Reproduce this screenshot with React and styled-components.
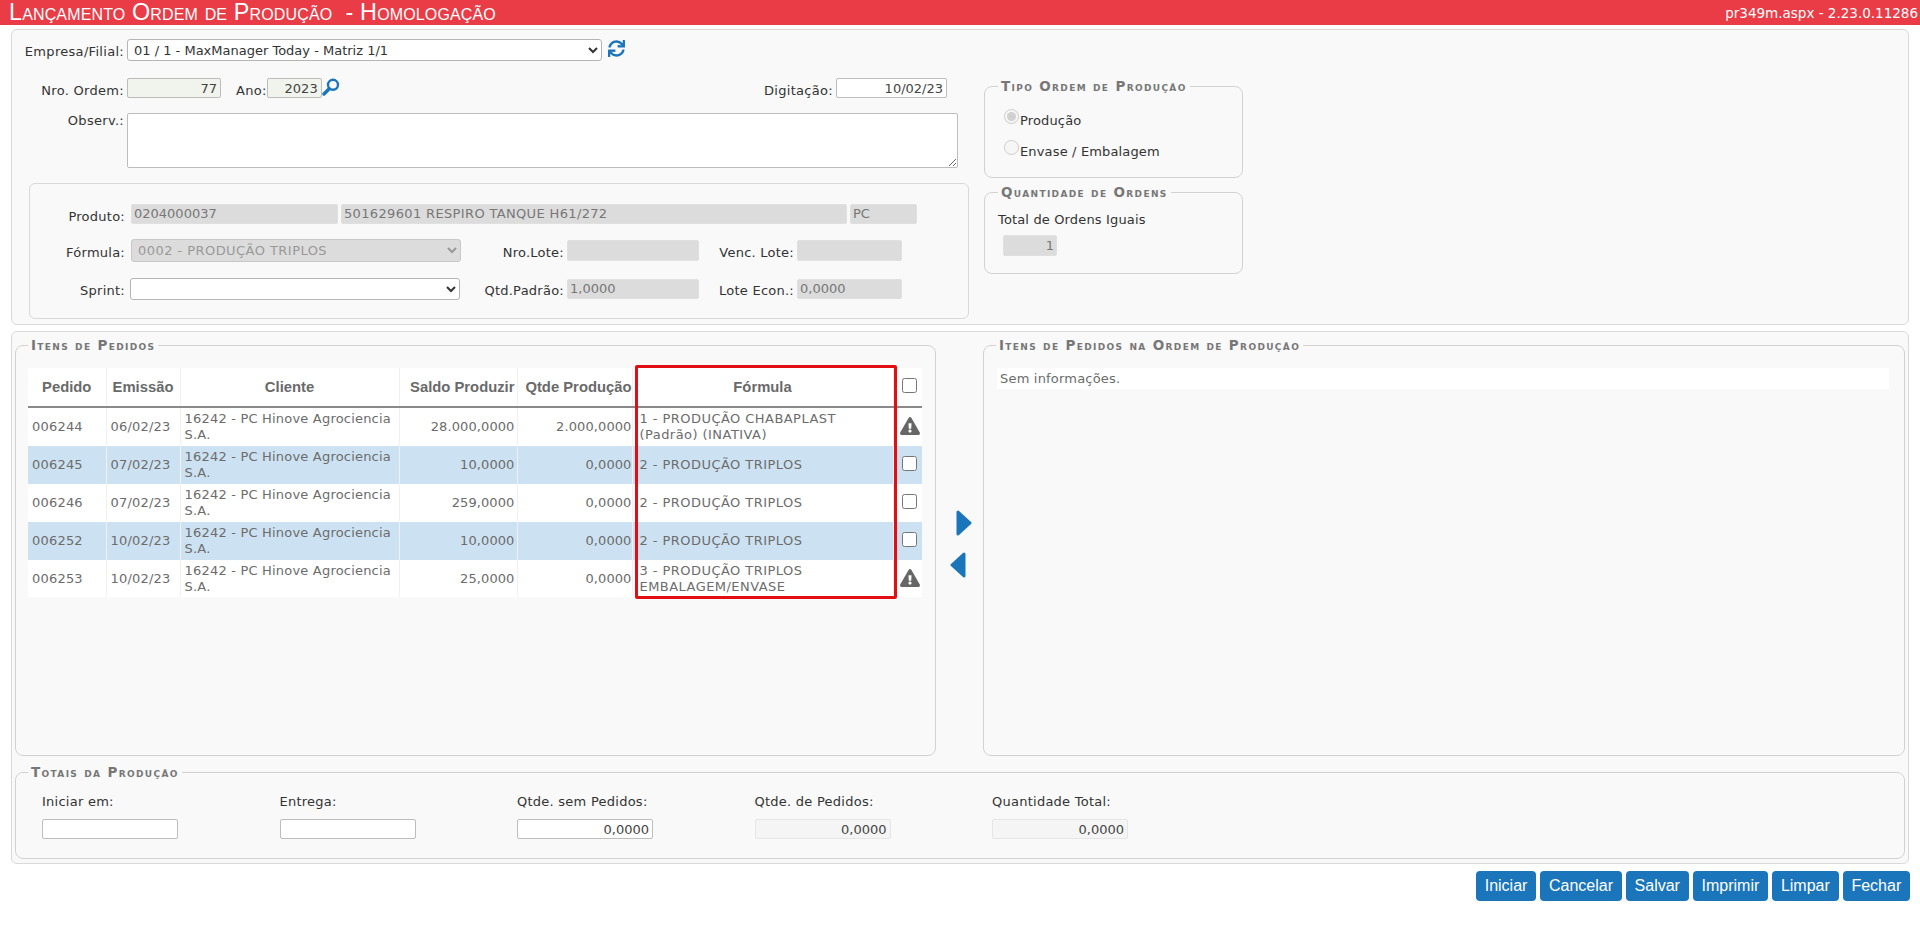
import React from "react";
import styled, { createGlobalStyle } from "styled-components";
import { FaSync, FaExclamationTriangle } from "react-icons/fa";

const GlobalStyle = createGlobalStyle`
  html, body { margin: 0; padding: 0; background: #fff; }
  body { font-family: "DejaVu Sans", Verdana, sans-serif; font-size: 13px; color: #333; }
  * { box-sizing: border-box; }
`;

const blue = "#1b75bb";

const TitleBar = styled.header`
  height: 25px; background: #e93c46; color: #fff; display: flex; align-items: center;
  justify-content: space-between; padding: 0 2px 0 9px;
`;
const Title = styled.h1`
  margin: 0; font: 400 23.4px/23px "Liberation Sans", Arial, sans-serif; font-variant: small-caps; white-space: pre; letter-spacing: .14px;
`;
const Version = styled.span` font-size: 13.5px; `;

const Panel = styled.section`
  margin: ${p => p.$top}px 11px 0; width: 1898px; background: #f9f9f9;
  border: 1px solid #d9d9d9; border-radius: 6px;
`;
const TopPanel = styled(Panel)` display: flex; gap: 15px; height: 296px; `;
const LeftCol = styled.div` width: 957px; padding-top: 9px; display: flex; flex-direction: column; `;
const RightCol = styled.div` width: 259px; padding-top: 49px; display: flex; flex-direction: column; gap: 7px; `;

const Row = styled.div`
  display: flex; align-items: ${p => p.$align || "center"}; height: ${p => p.$h}px; margin-top: ${p => p.$mt || 0}px;
`;
const Label = styled.label`
  flex: none; width: ${p => (p.$w ? p.$w + "px" : "auto")}; text-align: right; margin-left: ${p => p.$ml || 0}px;
  margin-right: ${p => p.$mr ?? 3}px; padding-top: ${p => p.$pt ?? 3}px; color: #333; white-space: nowrap; letter-spacing: .3px;
`;

const Field = styled.input`
  flex: none; display: block; width: ${p => p.$w}px; height: ${p => p.$h || 20}px; margin: 0; padding: 0 ${p => p.$kind === "gray" ? 2 : 3}px;
  font: 13px "DejaVu Sans", Verdana, sans-serif; text-align: ${p => p.$right ? "right" : "left"};
  color: ${p => p.$kind === "gray" ? "#777" : "#444"}; border-radius: 2px; outline: none;
  background: ${p => p.$kind === "gray" ? "#dcdcdc" : p.$kind === "key" ? "#f0f4ec" : p.$kind === "soft" ? "#f5f5f5" : "#fff"};
  border: 1px solid ${p => p.$kind === "gray" ? "#e0e0e0" : p.$kind === "soft" ? "#e6e6e6" : "#bdbdbd"};
`;
const ProductField = styled(Field)` padding-bottom: 2px; letter-spacing: ${p => p.$ls || 0}px; `;
const Select = styled.select`
  flex: none; display: block; width: ${p => p.$w}px; height: ${p => p.$h}px; margin: 0 0 0 ${p => p.$ml || 0}px; padding: 0 2px;
  font: 13px "DejaVu Sans", Verdana, sans-serif; letter-spacing: ${p => p.$ls || 0}px; color: #333; background: #fff; border: 1px solid #b5b5b5; border-radius: 3px;
  &:disabled { background: #dcdcdc; color: #999; border-color: #c8c8c8; opacity: 1; }
`;
const Area = styled.textarea`
  display: block; width: 831px; height: 55px; margin: 0; background: #fff; border: 1px solid #bdbdbd; border-radius: 2px;
`;
const IconBtn = styled.span`
  flex: none; display: inline-flex; color: ${blue}; margin-left: ${p => p.$ml || 0}px; align-self: flex-start; margin-top: ${p => p.$mt || 0}px;
`;
const PushRight = styled.div` margin-left: auto; display: flex; align-items: center; margin-right: 22px; `;

const ProductBox = styled.div`
  margin: 15px 0 0 17px; width: 940px; height: 136px; padding: 20px 0 0 0; border: 1px solid #d9d9d9; border-radius: 6px;
`;
const ProductRow = styled.div` display: flex; align-items: center; gap: 3px; height: 20px; `;
const ProductLabel = styled.label` flex: none; width: 98px; padding: 5px 3px 0 0; text-align: right; letter-spacing: .25px; white-space: nowrap; `;
const ProductGrid = styled.div`
  display: grid; grid-template-columns: 101px 330px 106px 132px 98px 105px; row-gap: 15px; grid-auto-rows: 23px;
  align-items: center; margin-top: 15px;
`;
const GridLabel = styled.label` text-align: right; padding-right: ${p => p.$pr ?? 6}px; padding-top: 3px; white-space: nowrap; letter-spacing: .25px; `;

const Fieldset = styled.fieldset`
  margin: 0; min-width: 0; width: ${p => p.$w ? p.$w + "px" : "auto"}; height: ${p => p.$h}px; padding: ${p => p.$pad || "0"};
  border: 1px solid #d2d2d2; border-radius: 8px;
`;
const Legend = styled.legend`
  margin-left: ${p => p.$ml || 0}px; padding: 0 3px; font: bold 13.5px/14px "DejaVu Sans", Verdana, sans-serif;
  font-variant: small-caps; letter-spacing: 1.35px; color: #777; white-space: nowrap;
`;
const RadioRow = styled.label` display: flex; align-items: flex-start; height: 31px; color: #333; `;
const Radio = styled.input` width: 15px; height: 15px; margin: 0 1px 0 0; flex: none; `;
const RadioText = styled.span` padding-top: 4px; letter-spacing: .15px; `;
const Caption = styled.div` line-height: 16px; letter-spacing: .15px; `;
const Ones = styled(Field)` margin: 7px 0 0 5px; `;

const ColumnsRow = styled.div`
  display: flex; padding: ${p => p.$pad || "6px 3px 0"};
`;
const ArrowCol = styled.div`
  width: 47px; flex: none; display: flex; flex-direction: column; justify-content: center; gap: 16px; padding-bottom: 6px;
`;
const ArrowSvg = styled.svg` display: block; width: 16px; height: 26px; margin-left: ${p => p.$ml}px; `;

const TableWrap = styled.div` position: relative; width: 894px; `;
const Table = styled.table`
  border-collapse: collapse; table-layout: fixed; width: 894px; background: #fff; color: #6c6c6c; font-size: 13px;
`;
const Col = styled.col` width: ${p => p.$w}px; `;
const Th = styled.th`
  height: 39px; padding: 0 ${p => p.$pr || 0}px 0 0; border-right: 1px solid #f1f1f1; border-bottom: 2px solid #8a8a8a;
  text-align: ${p => p.$pr !== undefined ? "right" : "center"}; white-space: nowrap;
  font: bold 14.8px "Liberation Sans", Arial, sans-serif; color: #6a6a6a;
  &:last-child { border-right: 0; }
`;
const Tr = styled.tr` background: ${p => p.$alt ? "#cce2f2" : "#fff"}; height: ${p => p.$h}px; `;
const Td = styled.td`
  padding: 0 ${p => p.$pr ?? 3}px 0 ${p => p.$pl ?? 4}px; line-height: 16px; border-right: 1px solid #f1f1f1; letter-spacing: ${p => p.$ls ?? 0.2}px;
  text-align: ${p => p.$right ? "right" : "left"};
  &:last-child { border-right: 0; text-align: center; padding: 0; }
`;
const Check = styled.input` display: block; width: 15px; height: 15px; margin: -3px auto 0 8px; `;
const Warn = styled(FaExclamationTriangle)` display: block; margin: -2px 0 0 6px; color: #666; width: 20px; height: 18px; `;
const RedBox = styled.div`
  position: absolute; left: 607px; top: -3px; width: 262px; height: 234px; border: 3px solid #e30d14; border-radius: 2px; pointer-events: none;
`;
const EmptyRow = styled.div`
  background: #fff; height: 21px; width: 892px; margin-left: 13px; padding-left: 3px; line-height: 21px; color: #6c6c6c; letter-spacing: .2px;
`;

const TotalsGrid = styled.div`
  display: grid; grid-template-columns: repeat(5, 237.5px); row-gap: 9px; padding-left: 26px;
`;
const TotalLabel = styled.div` line-height: 16px; letter-spacing: .25px; `;

const Actions = styled.div` display: flex; justify-content: flex-end; gap: 4px; margin: 7px 10px 0 0; `;
const Button = styled.button`
  height: 30px; padding: 0 8.8px; background: ${blue}; color: #fff; border: 0; border-radius: 4px;
  font: 16px "Liberation Sans", Arial, sans-serif;
`;

const Lens = () => (
  <svg width="18" height="18" viewBox="0 0 18 18" fill="none" stroke={blue}>
    <circle cx="11" cy="6.8" r="5" strokeWidth="2.4" />
    <path d="M7.2 10.8 2 16" strokeWidth="3.4" strokeLinecap="round" />
  </svg>
);
const Arrow = ({ left, ml }) => (
  <ArrowSvg $ml={ml} viewBox="0 0 16 26">
    <path d={left ? "M14 2 L2 13 L14 24 Z" : "M2 2 L14 13 L2 24 Z"} fill={blue} stroke={blue} strokeWidth="3" strokeLinejoin="round" />
  </ArrowSvg>
);

const rows = [
  ["006244", "06/02/23", "28.000,0000", "2.000,0000", <>1 - PRODUÇÃO CHABAPLAST<br />(Padrão) (INATIVA)</>, false, 39],
  ["006245", "07/02/23", "10,0000", "0,0000", "2 - PRODUÇÃO TRIPLOS", true, 38],
  ["006246", "07/02/23", "259,0000", "0,0000", "2 - PRODUÇÃO TRIPLOS", true, 38],
  ["006252", "10/02/23", "10,0000", "0,0000", "2 - PRODUÇÃO TRIPLOS", true, 38],
  ["006253", "10/02/23", "25,0000", "0,0000", <>3 - PRODUÇÃO TRIPLOS<br />EMBALAGEM/ENVASE</>, false, 37],
];

export default function App() {
  return (
    <>
      <GlobalStyle />
      <TitleBar>
        <Title>{"Lançamento Ordem de Produção  - Homologação"}</Title>
        <Version>pr349m.aspx - 2.23.0.11286</Version>
      </TitleBar>

      <TopPanel $top={4}>
        <LeftCol>
          <Row $h={22}>
            <Label $w={112}>Empresa/Filial:</Label>
            <Select $w={475} $h={22} defaultValue="a"><option value="a">01 / 1 - MaxManager Today - Matriz 1/1</option></Select>
            <IconBtn $ml={6} $mt={1}><FaSync size={17} /></IconBtn>
          </Row>
          <Row $h={20} $mt={17}>
            <Label $w={112} $pt={4}>Nro. Ordem:</Label>
            <Field $w={94} $kind="key" $right readOnly value="77" />
            <Label $ml={15} $mr={0} $pt={4}>Ano:</Label>
            <Field $w={55} $kind="key" $right readOnly value="2023" />
            <IconBtn><Lens /></IconBtn>
            <PushRight>
              <Label $pt={4}>Digitação:</Label>
              <Field $w={111} $right readOnly value="10/02/23" />
            </PushRight>
          </Row>
          <Row $h={55} $mt={15} $align="flex-start">
            <Label $w={112} $pt={0}>Observ.:</Label>
            <Area />
          </Row>
          <ProductBox>
            <ProductRow>
              <ProductLabel>Produto:</ProductLabel>
              <ProductField $w={207} $kind="gray" readOnly value="0204000037" />
              <ProductField $w={506} $kind="gray" $ls={0.35} readOnly value="501629601 RESPIRO TANQUE H61/272" />
              <ProductField $w={67} $kind="gray" readOnly value="PC" />
            </ProductRow>
            <ProductGrid>
              <GridLabel>Fórmula:</GridLabel>
              <Select $w={330} $h={23} $ls={0.45} disabled defaultValue="a"><option value="a">0002 - PRODUÇÃO TRIPLOS</option></Select>
              <GridLabel $pr={3}>Nro.Lote:</GridLabel>
              <Field $w={132} $h={21} $kind="gray" readOnly value="" />
              <GridLabel $pr={3}>Venc. Lote:</GridLabel>
              <Field $w={105} $h={21} $kind="gray" readOnly value="" />
              <GridLabel>Sprint:</GridLabel>
              <Select $w={330} $h={22} $ml={-1} defaultValue=""><option value=""></option></Select>
              <GridLabel $pr={3}>Qtd.Padrão:</GridLabel>
              <Field $w={132} $kind="gray" readOnly value="1,0000" />
              <GridLabel $pr={3}>Lote Econ.:</GridLabel>
              <Field $w={105} $kind="gray" readOnly value="0,0000" />
            </ProductGrid>
          </ProductBox>
        </LeftCol>
        <RightCol>
          <Fieldset $h={99} $pad="16px 0 0 19px">
            <Legend $ml={-6}>Tipo Ordem de Produção</Legend>
            <RadioRow><Radio type="radio" name="t" disabled defaultChecked /><RadioText>Produção</RadioText></RadioRow>
            <RadioRow><Radio type="radio" name="t" disabled /><RadioText>Envase / Embalagem</RadioText></RadioRow>
          </Fieldset>
          <Fieldset $h={89} $pad="13px 0 0 13px">
            <Legend>Quantidade de Ordens</Legend>
            <Caption>Total de Ordens Iguais</Caption>
            <Ones $w={54} $h={21} $kind="gray" $right readOnly value="1" />
          </Fieldset>
        </RightCol>
      </TopPanel>

      <Panel $top={6}>
        <ColumnsRow>
          <Fieldset $h={418} $w={921} $pad="16px 0 0 12px">
            <Legend>Itens de Pedidos</Legend>
            <TableWrap>
              <Table>
                <colgroup>
                  <Col $w={78} /><Col $w={74} /><Col $w={219} /><Col $w={118} /><Col $w={115} /><Col $w={261} /><Col $w={29} />
                </colgroup>
                <thead>
                  <tr>
                    <Th>Pedido</Th><Th>Emissão</Th><Th>Cliente</Th><Th $pr={2}>Saldo Produzir</Th><Th $pr={0}>Qtde Produção</Th><Th>Fórmula</Th>
                    <Th><Check type="checkbox" /></Th>
                  </tr>
                </thead>
                <tbody>
                  {rows.map(r => (
                    <Tr key={r[0]} $alt={r[0] === "006245" || r[0] === "006252"} $h={r[6]}>
                      <Td>{r[0]}</Td>
                      <Td>{r[1]}</Td>
                      <Td>16242 - PC Hinove Agrociencia<br />S.A.</Td>
                      <Td $right $ls={0.1} $pr={2}>{r[2]}</Td>
                      <Td $right $ls={0.1} $pr={0}>{r[3]}</Td>
                      <Td $pl={7} $ls={0.45}>{r[4]}</Td>
                      <Td>{r[5] ? <Check type="checkbox" /> : <Warn />}</Td>
                    </Tr>
                  ))}
                </tbody>
              </Table>
              <RedBox />
            </TableWrap>
          </Fieldset>
          <ArrowCol>
            <Arrow ml={20} />
            <Arrow left ml={14} />
          </ArrowCol>
          <Fieldset $h={418} $w={922} $pad="16px 0 0 0">
            <Legend $ml={12}>Itens de Pedidos na Ordem de Produção</Legend>
            <EmptyRow>Sem informações.</EmptyRow>
          </Fieldset>
        </ColumnsRow>
        <ColumnsRow $pad="9px 3px 4px">
          <Fieldset $h={94} $w={1890} $pad="15px 0 0 0">
            <Legend $ml={12}>Totais da Produção</Legend>
            <TotalsGrid>
              <TotalLabel>Iniciar em:</TotalLabel>
              <TotalLabel>Entrega:</TotalLabel>
              <TotalLabel>Qtde. sem Pedidos:</TotalLabel>
              <TotalLabel>Qtde. de Pedidos:</TotalLabel>
              <TotalLabel>Quantidade Total:</TotalLabel>
              <Field $w={136} readOnly value="" />
              <Field $w={136} readOnly value="" />
              <Field $w={136} $right readOnly value="0,0000" />
              <Field $w={136} $kind="soft" $right readOnly value="0,0000" />
              <Field $w={136} $kind="soft" $right readOnly value="0,0000" />
            </TotalsGrid>
          </Fieldset>
        </ColumnsRow>
      </Panel>

      <Actions>
        {["Iniciar", "Cancelar", "Salvar", "Imprimir", "Limpar", "Fechar"].map(b => <Button key={b}>{b}</Button>)}
      </Actions>
    </>
  );
}
